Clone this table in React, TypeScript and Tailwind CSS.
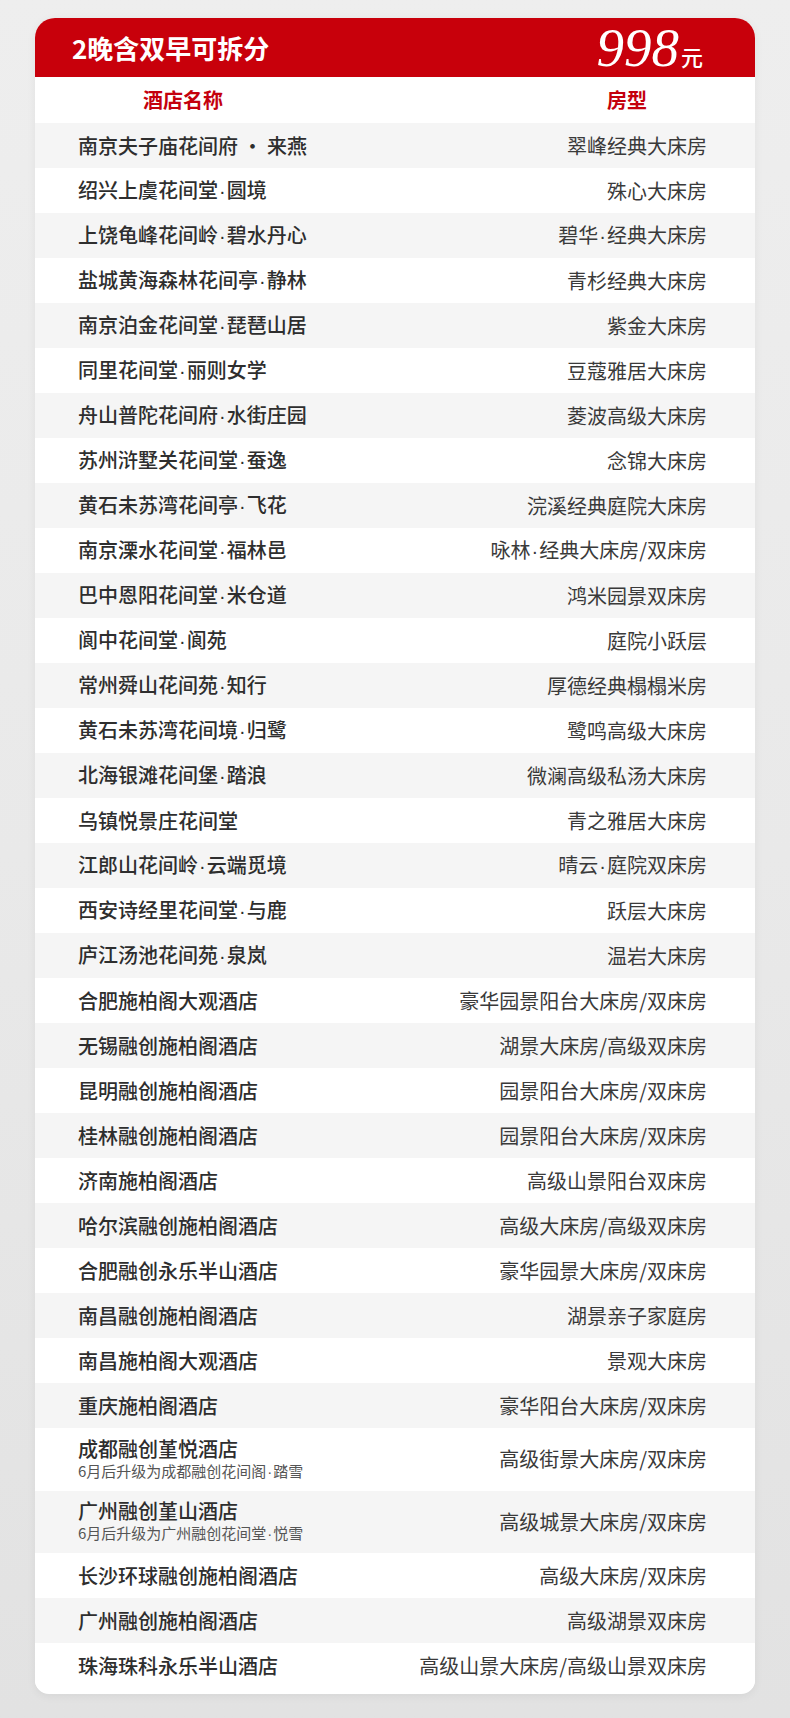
const hotels: { name: string; note?: string; room: string }[] = [
  { name: "南京夫子庙花间府 • 来燕", room: "翠峰经典大床房" },
  { name: "绍兴上虞花间堂·圆境", room: "殊心大床房" },
  { name: "上饶龟峰花间岭·碧水丹心", room: "碧华·经典大床房" },
  { name: "盐城黄海森林花间亭·静林", room: "青杉经典大床房" },
  { name: "南京泊金花间堂·琵琶山居", room: "紫金大床房" },
  { name: "同里花间堂·丽则女学", room: "豆蔻雅居大床房" },
  { name: "舟山普陀花间府·水街庄园", room: "菱波高级大床房" },
  { name: "苏州浒墅关花间堂·蚕逸", room: "念锦大床房" },
  { name: "黄石未苏湾花间亭·飞花", room: "浣溪经典庭院大床房" },
  { name: "南京溧水花间堂·福林邑", room: "咏林·经典大床房/双床房" },
  { name: "巴中恩阳花间堂·米仓道", room: "鸿米园景双床房" },
  { name: "阆中花间堂·阆苑", room: "庭院小跃层" },
  { name: "常州舜山花间苑·知行", room: "厚德经典榻榻米房" },
  { name: "黄石未苏湾花间境·归鹭", room: "鹭鸣高级大床房" },
  { name: "北海银滩花间堡·踏浪", room: "微澜高级私汤大床房" },
  { name: "乌镇悦景庄花间堂", room: "青之雅居大床房" },
  { name: "江郎山花间岭·云端觅境", room: "晴云·庭院双床房" },
  { name: "西安诗经里花间堂·与鹿", room: "跃层大床房" },
  { name: "庐江汤池花间苑·泉岚", room: "温岩大床房" },
  { name: "合肥施柏阁大观酒店", room: "豪华园景阳台大床房/双床房" },
  { name: "无锡融创施柏阁酒店", room: "湖景大床房/高级双床房" },
  { name: "昆明融创施柏阁酒店", room: "园景阳台大床房/双床房" },
  { name: "桂林融创施柏阁酒店", room: "园景阳台大床房/双床房" },
  { name: "济南施柏阁酒店", room: "高级山景阳台双床房" },
  { name: "哈尔滨融创施柏阁酒店", room: "高级大床房/高级双床房" },
  { name: "合肥融创永乐半山酒店", room: "豪华园景大床房/双床房" },
  { name: "南昌融创施柏阁酒店", room: "湖景亲子家庭房" },
  { name: "南昌施柏阁大观酒店", room: "景观大床房" },
  { name: "重庆施柏阁酒店", room: "豪华阳台大床房/双床房" },
  {
    name: "成都融创堇悦酒店",
    note: "6月后升级为成都融创花间阁·踏雪",
    room: "高级街景大床房/双床房",
  },
  {
    name: "广州融创堇山酒店",
    note: "6月后升级为广州融创花间堂·悦雪",
    room: "高级城景大床房/双床房",
  },
  { name: "长沙环球融创施柏阁酒店", room: "高级大床房/双床房" },
  { name: "广州融创施柏阁酒店", room: "高级湖景双床房" },
  { name: "珠海珠科永乐半山酒店", room: "高级山景大床房/高级山景双床房" },
];

// the narrow latin middle dot, as in the original layout
function Dotted({ text }: { text: string }) {
  const parts = text.split("·");
  return (
    <>
      {parts.map((p, i) => (
        <span key={i}>
          {i > 0 && (
            <span className="font-['Liberation_Sans',sans-serif] px-[1px]">·</span>
          )}
          {p}
        </span>
      ))}
    </>
  );
}

export default function App() {
  return (
    <div className="min-h-[1718px] w-[790px] bg-gradient-to-b from-[#eeeeee] via-[#e9e9e9] to-[#e2e2e2] pt-[18px] font-['Noto_Sans_CJK_SC',sans-serif]">
      <div className="ml-[35px] w-[720px] overflow-hidden rounded-t-[20px] rounded-b-[14px] bg-white pb-[6px] shadow-[0_2px_10px_rgba(0,0,0,0.06)]">
        {/* Red title bar */}
        <div className="flex h-[59px] items-center justify-between bg-[#c8000b] pl-[37px] pr-[52px]">
          <span className="text-[26px] font-bold leading-none text-white">
            2晚含双早可拆分
          </span>
          <span className="flex items-baseline text-white">
            <span className="font-['Liberation_Serif',serif] text-[55px] italic leading-none">
              998
            </span>
            <span className="ml-[2px] text-[22px] font-medium leading-none">元</span>
          </span>
        </div>

        {/* Column headings */}
        <div className="flex h-[46px] items-center text-[20px] font-bold text-[#c4000d]">
          <span className="w-[296px] text-center">酒店名称</span>
          <span className="ml-auto w-[256px] text-center">房型</span>
        </div>

        {/* Rows */}
        {hotels.map((h, i) => (
          <div
            key={h.name}
            className={
              "flex items-center justify-between pl-[43px] pr-[48px] " +
              (h.note ? "h-[62.5px] " : "h-[45px] ") +
              (i % 2 === 0 ? "bg-[#f5f5f5]" : "bg-white")
            }
          >
            <div className="flex flex-col">
              <span className="text-[20px] font-medium leading-[24px] text-[#2e2e2e]">
                <Dotted text={h.name} />
              </span>
              {h.note && (
                <span className="text-[15px] leading-[20px] text-[#555555]">
                  <Dotted text={h.note} />
                </span>
              )}
            </div>
            <span className="text-[20px] leading-[24px] text-[#3a3a3a]">
              <Dotted text={h.room} />
            </span>
          </div>
        ))}
      </div>
    </div>
  );
}
